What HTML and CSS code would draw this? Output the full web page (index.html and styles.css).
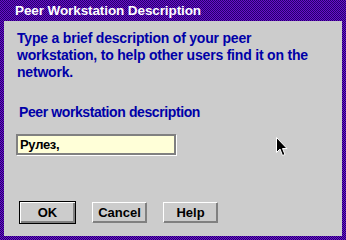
FILE: index.html
```html
<!DOCTYPE html>
<html lang="en">
<head>
    <meta charset="UTF-8">
    <title>Peer Workstation Description</title>
    <link rel="stylesheet" href="styles.css">
</head>
<body>

    <div class="window">
        <div class="titlebar">Peer Workstation Description</div>

        <div class="client">
            <p class="intro">Type a brief description of your peer<br>workstation, to help other users find it on the<br>network.</p>

            <label class="field-label" for="desc">Peer workstation description</label>
            <div class="field-wrap">
                <input class="field" type="text" id="desc" value="Рулез,">
            </div>

            <div class="buttons">
                <button type="button" class="btn btn-default">OK</button>
                <button type="button" class="btn">Cancel</button>
                <button type="button" class="btn">Help</button>
            </div>
        </div>

        <!-- mouse pointer sitting over the dialog -->
        <svg class="pointer" width="12" height="20" viewBox="0 0 12 20">
            <path d="M0.5 0.5 L0.5 15.5 L4 12 L6.5 18.5 L9 17.5 L6.5 11.5 L11 11.5 Z" fill="#000" stroke="#fff" stroke-width="1"/>
        </svg>
    </div>

</body>
</html>
```

FILE: styles.css
```css
body {
    margin: 0;
    padding: 0;
    background: #cccccc;
    font-family: "Liberation Sans", Arial, sans-serif;
}

.window {
    position: relative;
    width: 346px;
    height: 240px;
    box-sizing: border-box;
    padding: 0 4px 4px 4px;
    display: flex;
    flex-direction: column;
    /* dithered purple frame */
    background: repeating-conic-gradient(#6a10c8 0 25%, #24006e 0 50%) 0 0 / 2px 2px;
}

.titlebar {
    height: 21px;
    line-height: 22px;
    padding-left: 11px;
    color: #ffffff;
    font-size: 13.5px;
    font-weight: bold;
    letter-spacing: -0.1px;
}

.client {
    flex: 1;
    background: #cccccc;
    padding: 9px 0 0 13px;
    display: flex;
    flex-direction: column;
}

.intro {
    margin: 0;
    color: #0000a8;
    font-size: 14px;
    font-weight: bold;
    line-height: 17px;
    letter-spacing: -0.2px;
}

.field-label {
    margin-top: 23px;
    margin-left: 2px;
    color: #0000a8;
    font-size: 14px;
    font-weight: bold;
    line-height: 17px;
    letter-spacing: -0.4px;
}

.field-wrap {
    margin-top: 13px;
    margin-left: -1px;
    width: 160px;
    box-shadow: 1px 1px 0 #ffffff;
}

.field {
    display: block;
    width: 160px;
    height: 21px;
    box-sizing: border-box;
    margin: 0;
    padding: 0 0 0 2px;
    border: 2px solid #808080;
    background: #ffffd8;
    color: #000000;
    font-family: "Liberation Sans", Arial, sans-serif;
    font-size: 13px;
    font-weight: bold;
    letter-spacing: -0.3px;
    outline: none;
}

.buttons {
    margin-top: 46px;
    margin-left: 2px;
    display: flex;
    align-items: center;
    gap: 16px;
}

.btn {
    width: 55px;
    height: 21px;
    margin: 0;
    padding: 0;
    background: #cccccc;
    color: #000000;
    font-family: "Liberation Sans", Arial, sans-serif;
    font-size: 13px;
    font-weight: bold;
    border: 1px solid;
    border-color: #ffffff #808080 #808080 #ffffff;
    box-shadow: inset -1px -1px 0 #808080;
}

.btn-default {
    width: 57px;
    height: 23px;
    border-color: #000000;
    box-shadow: inset 1px 1px 0 #ffffff, inset -2px -2px 0 #808080;
}

.pointer {
    position: absolute;
    left: 276px;
    top: 137px;
}
```
